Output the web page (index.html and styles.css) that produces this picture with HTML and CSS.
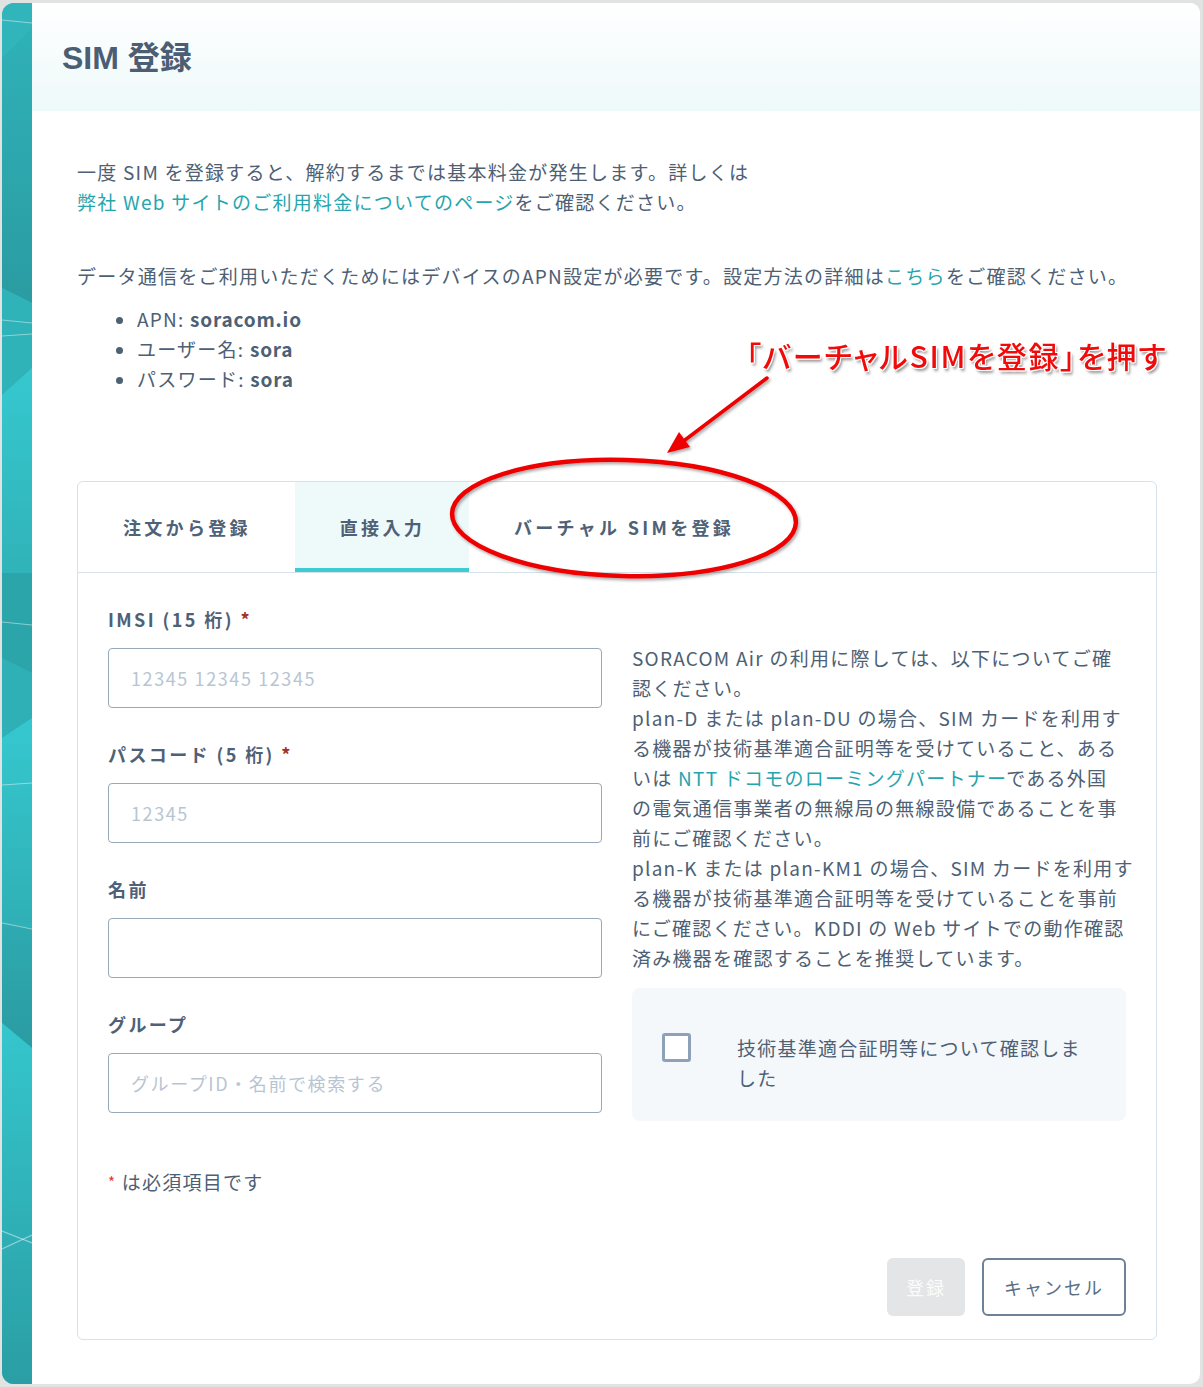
FILE: index.html
```html
<!DOCTYPE html>
<html lang="ja">
<head>
<meta charset="utf-8">
<title>SIM 登録</title>
<link rel="stylesheet" href="styles.css">
</head>
<body>
<div class="window">
  <aside class="strip">
    <svg class="strip-art" viewBox="0 0 30 1381" preserveAspectRatio="none" width="30" height="1381">
      <defs>
        <linearGradient id="g2" x1="0" y1="0" x2="0" y2="1"><stop offset="0" stop-color="#2fb1b7"/><stop offset="1" stop-color="#2a9ca2"/></linearGradient>
        <linearGradient id="g4" x1="0" y1="0" x2="0" y2="1"><stop offset="0" stop-color="#36c8cf"/><stop offset="1" stop-color="#30b3b9"/></linearGradient>
        <linearGradient id="g7" x1="0" y1="0" x2="0" y2="1"><stop offset="0" stop-color="#36c8cf"/><stop offset="1" stop-color="#2fb0b6"/></linearGradient>
        <linearGradient id="g8" x1="0" y1="0" x2="0" y2="1"><stop offset="0" stop-color="#2eaab0"/><stop offset="1" stop-color="#2a9ca2"/></linearGradient>
        <linearGradient id="g9" x1="0" y1="0" x2="0" y2="1"><stop offset="0" stop-color="#35c6cd"/><stop offset="1" stop-color="#2a9ea4"/></linearGradient>
      </defs>
      <polygon points="0,0 30,0 30,25 0,55" fill="#31b5bb"/>
      <polygon points="0,55 30,25 30,300 0,285" fill="url(#g2)"/>
      <polygon points="0,285 30,300 30,365 0,392" fill="#2fb2b8"/>
      <polygon points="0,392 30,365 30,570 0,570" fill="url(#g4)"/>
      <polygon points="0,570 30,570 30,670 0,655" fill="#2ba4aa"/>
      <polygon points="0,655 30,670 30,715 0,735" fill="#2fb0b6"/>
      <polygon points="0,735 30,715 30,920 0,920" fill="url(#g7)"/>
      <polygon points="0,920 30,925 30,1045 0,1020" fill="url(#g8)"/>
      <polygon points="0,1020 30,1045 30,1381 0,1381" fill="url(#g9)"/>
      <g stroke="#ffffff" stroke-opacity="0.45" stroke-width="1.2" fill="none">
        <line x1="0" y1="17" x2="30" y2="20"/>
        <line x1="0" y1="317" x2="30" y2="320"/>
        <line x1="0" y1="333" x2="30" y2="331"/>
        <line x1="0" y1="619" x2="30" y2="622"/>
        <line x1="0" y1="782" x2="30" y2="780"/>
        <line x1="0" y1="920" x2="30" y2="926"/>
        <line x1="0" y1="1228" x2="30" y2="1240"/>
        <line x1="0" y1="1246" x2="30" y2="1232"/>
      </g>
    </svg>
  </aside>
  <main class="main">
    <header class="header">
      <h1 class="title">SIM 登録</h1>
    </header>
    <div class="content">
      <p class="intro">一度 SIM を登録すると、解約するまでは基本料金が発生します。詳しくは<br><a class="link" href="#">弊社 Web サイトのご利用料金についてのページ</a>をご確認ください。</p>
      <p class="intro apn">データ通信をご利用いただくためにはデバイスのAPN設定が必要です。設定方法の詳細は<a class="link" href="#">こちら</a>をご確認ください。</p>
      <ul class="apn-list">
        <li>APN: <b>soracom.io</b></li>
        <li>ユーザー名: <b>sora</b></li>
        <li>パスワード: <b>sora</b></li>
      </ul>

      <section class="card">
        <nav class="tabs">
          <div class="tab">注文から登録</div>
          <div class="tab tab-active">直接入力</div>
          <div class="tab">バーチャル SIMを登録</div>
        </nav>
        <div class="card-body">
          <div class="form-grid">
            <div class="col-left">
              <div class="field">
                <label class="field-label">IMSI (15 桁) <span class="req">*</span></label>
                <input class="field-input" type="text" placeholder="12345 12345 12345">
              </div>
              <div class="field">
                <label class="field-label">パスコード (5 桁) <span class="req">*</span></label>
                <input class="field-input" type="text" placeholder="12345">
              </div>
              <div class="field">
                <label class="field-label">名前</label>
                <input class="field-input" type="text">
              </div>
              <div class="field">
                <label class="field-label">グループ</label>
                <input class="field-input" type="text" placeholder="グループID・名前で検索する">
              </div>
              <p class="required-note"><span class="req-note">*</span> は必須項目です</p>
            </div>
            <div class="col-right">
              <div class="notice">
                <p>SORACOM Air の利用に際しては、以下についてご確<br>認ください。</p>
                <p>plan-D または plan-DU の場合、SIM カードを利用す<br>る機器が技術基準適合証明等を受けていること、ある<br>いは <a class="link" href="#">NTT ドコモのローミングパートナー</a>である外国<br>の電気通信事業者の無線局の無線設備であることを事<br>前にご確認ください。</p>
                <p>plan-K または plan-KM1 の場合、SIM カードを利用す<br>る機器が技術基準適合証明等を受けていることを事前<br>にご確認ください。KDDI の Web サイトでの動作確認<br>済み機器を確認することを推奨しています。</p>
              </div>
              <label class="confirm-box">
                <input class="confirm-check" type="checkbox">
                <span class="confirm-text">技術基準適合証明等について確認しました</span>
              </label>
            </div>
          </div>
          <div class="actions">
            <button class="btn btn-disabled" type="button">登録</button>
            <button class="btn btn-outline" type="button">キャンセル</button>
          </div>
        </div>
      </section>
    </div>
  </main>
</div>

<svg class="annot" width="1203" height="1387" viewBox="0 0 1203 1387">
  <defs>
    <filter id="shadow" x="-10%" y="-10%" width="120%" height="130%">
      <feDropShadow dx="1.5" dy="2" stdDeviation="1.5" flood-color="#000" flood-opacity="0.35"/>
    </filter>
  </defs>
  <g filter="url(#shadow)">
    <ellipse cx="624" cy="518" rx="172" ry="58" fill="none" stroke="#ee0000" stroke-width="4.5" transform="rotate(1.5 624 518)"/>
    <line x1="767" y1="378" x2="685" y2="440" stroke="#ee0000" stroke-width="3.5" stroke-linecap="round"/>
    <polygon points="667,453 690,447 679,432" fill="#ee0000"/>
  </g>
</svg>
<div class="annot-text">「バーチャルSIMを登録」を押す</div>
</body>
</html>
```

FILE: styles.css
```css
html, body {
  margin: 0;
  padding: 0;
}

body {
  width: 1203px;
  height: 1387px;
  background: #e1e3e3;
  position: relative;
  overflow: hidden;
  font-family: "Noto Sans CJK JP", "Noto Sans", sans-serif;
  color: #4d6074;
}

.window {
  margin: 3px 3px 0 2px;
  height: 1381px;
  display: flex;
  background: #ffffff;
  border-radius: 12px 10px 10px 12px;
  overflow: hidden;
}

.strip {
  flex: none;
  width: 30px;
  background: #2fb2b8;
}

.strip-art {
  display: block;
}

.main {
  flex: 1;
  min-width: 0;
}

.header {
  box-sizing: border-box;
  height: 108px;
  display: flex;
  align-items: center;
  padding-left: 30px;
  padding-bottom: 5px;
  background: linear-gradient(180deg, #ffffff 0%, #eef9fa 100%);
}

.title {
  margin: 0;
  font-family: "Liberation Sans", "Noto Sans CJK JP", sans-serif;
  font-size: 32px;
  font-weight: 700;
  color: #4b5e74;
  letter-spacing: 0;
}

.content {
  padding: 46px 43px 0 45px;
}

.intro {
  margin: 0;
  font-size: 19px;
  line-height: 30px;
  letter-spacing: 1.25px;
  white-space: nowrap;
}

.apn {
  margin-top: 44px;
}

.link {
  color: #26a5ae;
  text-decoration: none;
}

.apn-list {
  margin: 13px 0 0 0;
  padding-left: 60px;
  font-size: 19px;
  line-height: 30px;
  letter-spacing: 1.25px;
}

.apn-list b {
  font-weight: 700;
  letter-spacing: 0.8px;
}

.card {
  margin-top: 87px;
  border: 1px solid #d5e2ea;
  border-radius: 6px;
}

.tabs {
  display: flex;
  height: 90px;
  border-bottom: 1px solid #d5e2ea;
}

.tab {
  padding: 0 44px 0 45px;
  line-height: 90px;
  font-size: 18px;
  font-weight: 700;
  letter-spacing: 3.3px;
  color: #4e6177;
  white-space: nowrap;
}

.tab-active {
  background: #eefafa;
  box-shadow: inset 0 -4px 0 #3ecbd4;
}

.card-body {
  padding: 31px 30px 23px 30px;
}

.form-grid {
  display: grid;
  grid-template-columns: minmax(0, 1fr) minmax(0, 1fr);
  column-gap: 30px;
  align-items: start;
}

.field {
  display: flex;
  flex-direction: column;
  margin-bottom: 31px;
}

.field-label {
  font-size: 18px;
  line-height: 30px;
  font-weight: 700;
  letter-spacing: 2.4px;
  color: #4e6177;
  margin-bottom: 14px;
}

.req {
  color: #a3302b;
}

.field-input {
  box-sizing: border-box;
  height: 60px;
  width: 100%;
  border: 1px solid #97a8b9;
  border-radius: 4px;
  padding: 0 22px;
  font-family: "Noto Sans CJK JP", "Noto Sans", sans-serif;
  font-size: 18px;
  letter-spacing: 1.6px;
  color: #4d6074;
  background: #ffffff;
  outline: none;
}

.field-input::placeholder {
  color: #b7c5d3;
}

.required-note {
  margin: 54px 0 0 0;
  font-size: 19px;
  line-height: 30px;
  letter-spacing: 1.25px;
}

.req-note {
  color: #e2372c;
  font-size: 15px;
  vertical-align: 2px;
}

.col-right {
  margin-top: 39px;
  min-width: 0;
}

.notice p {
  margin: 0;
  font-size: 19px;
  line-height: 30px;
  letter-spacing: 1.25px;
  white-space: nowrap;
}

.confirm-box {
  margin-top: 15px;
  display: flex;
  align-items: flex-start;
  background: #f4f8fb;
  border-radius: 8px;
  padding: 45px 40px 28px 30px;
}

.confirm-check {
  appearance: none;
  -webkit-appearance: none;
  flex: none;
  box-sizing: border-box;
  width: 29px;
  height: 29px;
  margin: 0;
  border: 3px solid #8ea2b7;
  border-radius: 3px;
  background: #ffffff;
}

.confirm-text {
  margin-left: 46px;
  font-size: 19px;
  line-height: 30px;
  letter-spacing: 1.25px;
}

.actions {
  margin-top: 61px;
  display: flex;
  justify-content: flex-end;
  gap: 17px;
}

.btn {
  box-sizing: border-box;
  height: 58px;
  font-family: "Noto Sans CJK JP", "Noto Sans", sans-serif;
  font-size: 18px;
  letter-spacing: 2px;
  border-radius: 6px;
  cursor: pointer;
}

.btn-disabled {
  width: 78px;
  padding: 0;
  border: none;
  background: #e3e5e7;
  color: #fbfbfb;
}

.btn-outline {
  width: 144px;
  padding: 0;
  border: 2px solid #6d8297;
  background: #ffffff;
  color: #5c6f84;
}

.annot {
  position: absolute;
  left: 0;
  top: 0;
  pointer-events: none;
}

.annot-text {
  position: absolute;
  left: 746px;
  top: 339px;
  font-family: "Noto Sans CJK JP", sans-serif;
  font-size: 30px;
  line-height: 32px;
  font-weight: 500;
  font-feature-settings: "palt";
  letter-spacing: 1.8px;
  color: #f00a0a;
  white-space: nowrap;
  text-shadow:
    1px 0 0 #fff, -1px 0 0 #fff, 0 1px 0 #fff, 0 -1px 0 #fff,
    1px 1px 0 #fff, -1px -1px 0 #fff, 1px -1px 0 #fff, -1px 1px 0 #fff,
    2px 3px 3px rgba(0, 0, 0, 0.45);
}
```
